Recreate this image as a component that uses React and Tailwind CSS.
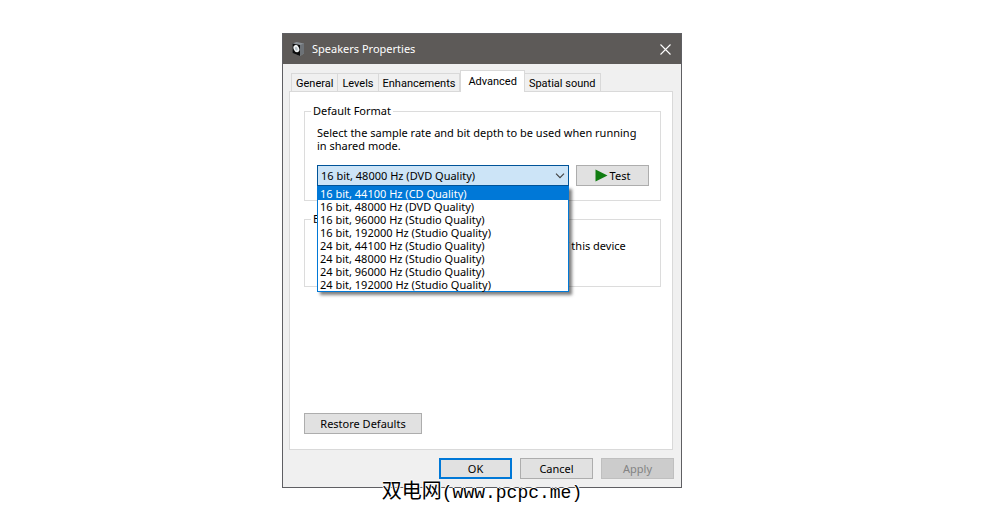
import { useState } from 'react'
import clsx from 'clsx'

const TABS = ['General', 'Levels', 'Enhancements', 'Advanced', 'Spatial sound']

const FORMATS = [
  '16 bit, 44100 Hz (CD Quality)',
  '16 bit, 48000 Hz (DVD Quality)',
  '16 bit, 96000 Hz (Studio Quality)',
  '16 bit, 192000 Hz (Studio Quality)',
  '24 bit, 44100 Hz (Studio Quality)',
  '24 bit, 48000 Hz (Studio Quality)',
  '24 bit, 96000 Hz (Studio Quality)',
  '24 bit, 192000 Hz (Studio Quality)',
]

function SpeakerIcon() {
  return (
    <svg viewBox="0 0 14 16" className="h-4 w-[14px]" aria-hidden>
      <path d="M1.5 2.5 L5.5 1 L13 2.5 V12.5 L9 15 L1.5 12 Z" fill="#8a9096" />
      <path d="M9 4 L13 2.5 V12.5 L9 15 Z" fill="#6d7277" />
      <path d="M1.5 2.5 L9 4 V15 L1.5 12 Z" fill="#0c0c0c" />
      <ellipse cx="5.4" cy="7.6" rx="2.7" ry="3.8" fill="#f0f3f4" transform="rotate(-25 5.4 7.6)" />
      <ellipse cx="5.3" cy="7.8" rx="1.3" ry="2" fill="#b4bfc6" transform="rotate(-25 5.3 7.8)" />
    </svg>
  )
}

function Button({ primary, className, children, ...props }) {
  return (
    <button
      type="button"
      className={clsx(
        'flex h-[21px] items-center justify-center bg-[#e1e1e1] leading-[13px] disabled:border-[#bfbfbf] disabled:bg-[#cccccc] disabled:text-[#838383]',
        primary ? 'border-2 border-[#0078d7]' : 'border border-[#adadad]',
        className,
      )}
      {...props}
    >
      {children}
    </button>
  )
}

function Group({ title, className, children }) {
  return (
    <fieldset className={clsx('border border-[#dcdcdc] pr-[11px] pl-3', className)}>
      <legend className="-ml-1.5 px-0.5 leading-[14px]">{title}</legend>
      {children}
    </fieldset>
  )
}

function FormatPicker() {
  const [format, setFormat] = useState(FORMATS[1])
  const [hovered, setHovered] = useState(0)

  return (
    <div className="relative min-w-0 flex-1">
      <select
        aria-label="Default format"
        value={format}
        onChange={(e) => setFormat(e.target.value)}
        className="block h-[21px] w-full appearance-none border border-[#005499] bg-[#cce4f7] pl-[3px] leading-[19px] outline-none"
      >
        {FORMATS.map((f) => (
          <option key={f}>{f}</option>
        ))}
      </select>
      <svg viewBox="0 0 10 6" className="pointer-events-none absolute top-2 right-1 h-1.5 w-2.5" aria-hidden>
        <path d="M1 0.7 L5 4.7 L9 0.7" fill="none" stroke="#404040" strokeWidth="1.1" />
      </svg>

      {/* Opened list */}
      <ul
        role="listbox"
        aria-label="Formats"
        className="absolute top-full left-0 z-10 w-full border border-[#0078d7] bg-white shadow-[3px_3px_3px_rgba(0,0,0,0.5)]"
      >
        {FORMATS.map((f, i) => (
          <li
            key={f}
            role="option"
            aria-selected={i === hovered}
            onMouseEnter={() => setHovered(i)}
            onClick={() => setFormat(f)}
            className={clsx('pl-0.5 leading-[13px] whitespace-nowrap', i === hovered && 'bg-[#0078d7] text-white')}
          >
            {f}
          </li>
        ))}
      </ul>
    </div>
  )
}

export default function App() {
  const [tab, setTab] = useState('Advanced')

  return (
    <main className="flex min-h-screen items-start justify-center bg-white pt-[33px] pr-[39px] font-['Noto_Sans',sans-serif] text-[11px] text-black">
      <section className="relative w-full max-w-[400px] border border-[#5f5f63] bg-[#f0f0f0]">
        <header className="flex h-[30px] items-center bg-[#5d5a58] px-2 text-white">
          <SpeakerIcon />
          <h1 className="ml-[7px] flex-1 leading-4">Speakers Properties</h1>
          <button type="button" aria-label="Close" className="p-0.5">
            <svg viewBox="0 0 11 11" className="size-[11px]" aria-hidden>
              <path d="M0.5 0.5 L10.5 10.5 M10.5 0.5 L0.5 10.5" stroke="#ffffff" strokeWidth="1.1" />
            </svg>
          </button>
        </header>

        <div className="pt-1.5 pr-[7px] pb-2 pl-1.5">
          <div role="tablist" className="flex items-end pl-0.5 font-[Roboto,sans-serif]">
            {TABS.map((t) => (
              <button
                key={t}
                type="button"
                role="tab"
                aria-selected={t === tab}
                onClick={() => setTab(t)}
                className={clsx(
                  'border-[#d9d9d9] leading-[13px] whitespace-nowrap',
                  t === tab
                    ? 'relative -mb-px h-[22px] border border-b-0 bg-white px-[7px]'
                    : 'h-[18px] border-t border-r px-1 pt-0.5 first:border-l',
                )}
              >
                {t}
              </button>
            ))}
          </div>

          <div role="tabpanel" className="mr-px border border-[#d9d9d9] bg-white pt-3 pr-[11px] pb-[15px] pl-3.5">
            <Group title="Default Format" className="pb-3.5">
              <p className="max-w-[325px] pt-2 leading-[13px]">
                Select the sample rate and bit depth to be used when running in shared mode.
              </p>
              <div className="mt-[13px] flex gap-[7px]">
                <FormatPicker />
                <Button className="w-[73px]">
                  <svg viewBox="0 0 13 13" className="size-[13px]" aria-hidden>
                    <path d="M0.5 0.5 L12.5 6.5 L0.5 12.5 Z" fill="#107c10" />
                  </svg>
                  <span className="ml-0.5">Test</span>
                </Button>
              </div>
            </Group>

            <Group title="Exclusive Mode" className="mt-[11px] pb-[34px]">
              <label className="mt-[13px] flex items-center gap-[5px] leading-[13px] whitespace-nowrap">
                <input type="checkbox" defaultChecked className="size-[13px]" />
                Allow applications to take exclusive control of this device
              </label>
            </Group>

            <Button className="mt-[126px] w-[118px]">Restore Defaults</Button>
          </div>

          <footer className="mt-2 flex justify-end gap-2">
            <Button primary className="w-[73px]">OK</Button>
            <Button className="w-[73px]">Cancel</Button>
            <Button disabled className="w-[73px]">Apply</Button>
          </footer>
        </div>

        <p className="absolute top-full left-1/2 -mt-1 -translate-x-1/2 font-['Liberation_Mono','Noto_Sans_CJK_SC',monospace] text-[18px] leading-5 whitespace-nowrap [text-shadow:1px_0_#fff,-1px_0_#fff,0_1px_#fff,0_-1px_#fff]">
          <span className="text-[20px]">双电网</span>(www.pcpc.me)
        </p>
      </section>
    </main>
  )
}
